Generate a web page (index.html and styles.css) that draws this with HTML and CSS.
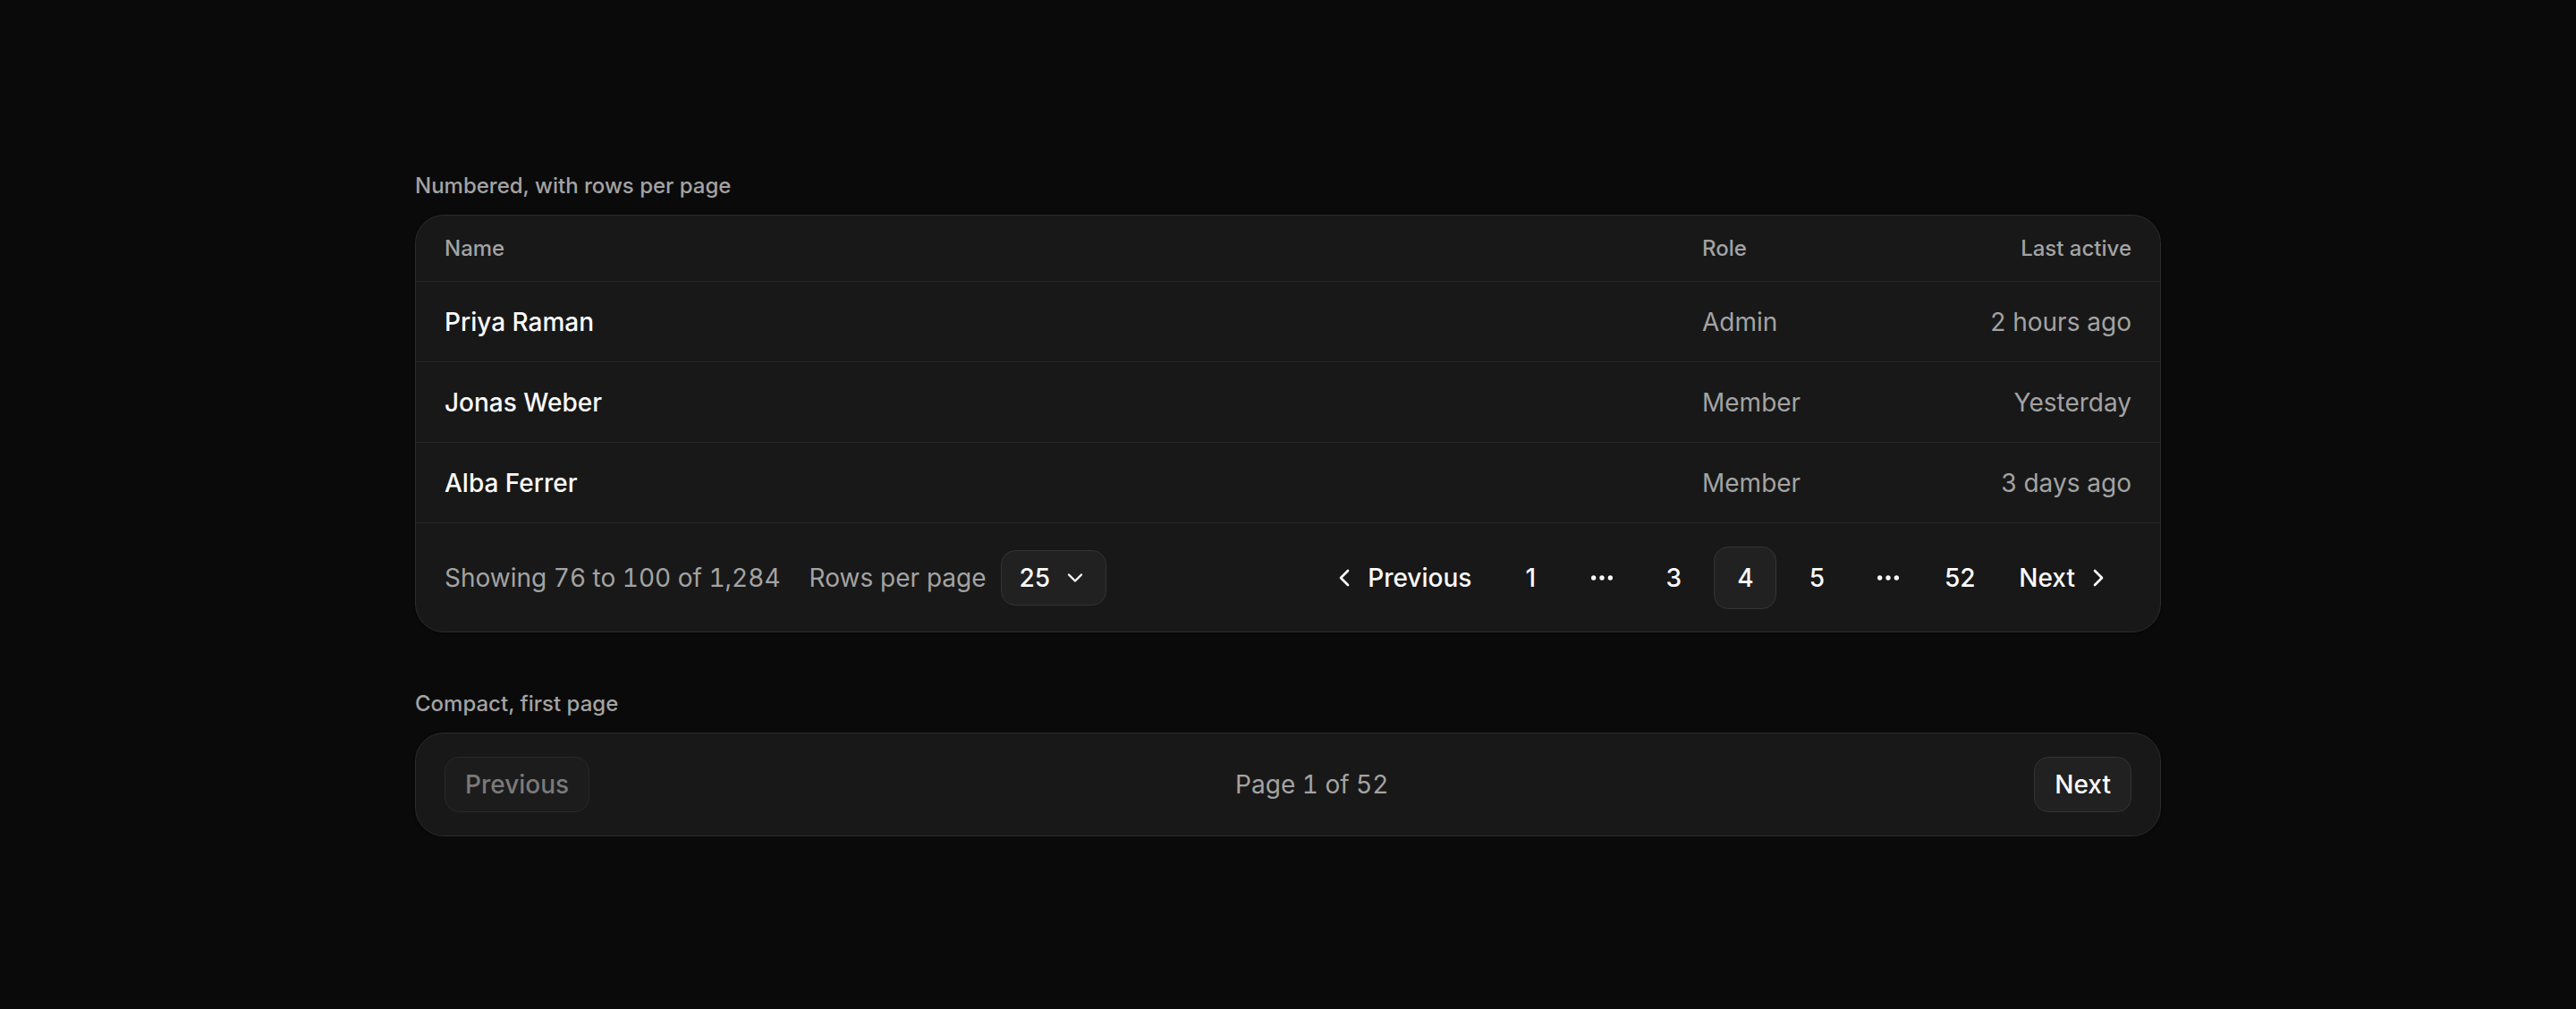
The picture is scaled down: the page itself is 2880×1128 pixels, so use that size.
FILE: index.html
```html
<!DOCTYPE html>
<html lang="en">
<head>
<meta charset="utf-8">
<title>Pagination</title>
<link rel="stylesheet" href="styles.css">
</head>
<body>
<main class="wrap">
  <section class="section">
    <div class="label">Numbered, with rows per page</div>
    <div class="card">
      <div class="row head">
        <div>Name</div>
        <div>Role</div>
        <div class="right">Last active</div>
      </div>
      <div class="row">
        <div class="name">Priya Raman</div>
        <div class="muted">Admin</div>
        <div class="muted right">2 hours ago</div>
      </div>
      <div class="row">
        <div class="name">Jonas Weber</div>
        <div class="muted">Member</div>
        <div class="muted right">Yesterday</div>
      </div>
      <div class="row">
        <div class="name">Alba Ferrer</div>
        <div class="muted">Member</div>
        <div class="muted right">3 days ago</div>
      </div>
      <div class="footer">
        <div class="meta">
          <span class="muted num">Showing 76 to 100 of 1,284</span>
          <div class="rpp">
            <span class="muted">Rows per page</span>
            <button class="select">25
              <svg class="ic-sm" viewBox="0 0 24 24" fill="none" stroke="currentColor" stroke-width="2" stroke-linecap="round" stroke-linejoin="round"><path d="m6 9 6 6 6-6"/></svg>
            </button>
          </div>
        </div>
        <nav class="pager">
          <button class="nav">
            <svg class="ic" viewBox="0 0 24 24" fill="none" stroke="currentColor" stroke-width="2" stroke-linecap="round" stroke-linejoin="round"><path d="m15 18-6-6 6-6"/></svg>
            Previous
          </button>
          <button class="page">1</button>
          <span class="page dots"><svg class="ic" viewBox="0 0 24 24" fill="none" stroke="currentColor" stroke-width="2" stroke-linecap="round" stroke-linejoin="round"><circle cx="12" cy="12" r="1"/><circle cx="19" cy="12" r="1"/><circle cx="5" cy="12" r="1"/></svg></span>
          <button class="page">3</button>
          <button class="page current">4</button>
          <button class="page">5</button>
          <span class="page dots"><svg class="ic" viewBox="0 0 24 24" fill="none" stroke="currentColor" stroke-width="2" stroke-linecap="round" stroke-linejoin="round"><circle cx="12" cy="12" r="1"/><circle cx="19" cy="12" r="1"/><circle cx="5" cy="12" r="1"/></svg></span>
          <button class="page">52</button>
          <button class="nav">
            Next
            <svg class="ic" viewBox="0 0 24 24" fill="none" stroke="currentColor" stroke-width="2" stroke-linecap="round" stroke-linejoin="round"><path d="m9 18 6-6-6-6"/></svg>
          </button>
        </nav>
      </div>
    </div>
  </section>

  <section class="section">
    <div class="label">Compact, first page</div>
    <div class="card compact">
      <button class="btn disabled">Previous</button>
      <span class="muted num">Page 1 of 52</span>
      <button class="btn">Next</button>
    </div>
  </section>
</main>
</body>
</html>
```

FILE: styles.css
```css
* { box-sizing: border-box; }

html, body {
  margin: 0;
  background: #0a0a0a;
}

body {
  font-family: Inter, "Noto Sans", "Liberation Sans", sans-serif;
  color: #fafafa;
  -webkit-font-smoothing: antialiased;
}

button {
  font-family: inherit;
  cursor: pointer;
}

.wrap {
  width: 1952px;
  margin: 0 auto;
  padding-top: 192px;
  display: flex;
  flex-direction: column;
  gap: 64px;
}

.label {
  font-size: 24px;
  line-height: 32px;
  font-weight: 500;
  color: #a3a3a3;
  margin-bottom: 16px;
}

.card {
  background: #181818;
  border: 1px solid #2c2c2c;
  border-radius: 32px;
  overflow: hidden;
  box-shadow: 0 1px 3px rgba(0, 0, 0, 0.5);
}

.row {
  display: grid;
  grid-template-columns: 1fr 240px 240px;
  align-items: center;
  padding: 0 32px;
  height: 90px;
  border-bottom: 1px solid #262626;
  font-size: 28px;
  line-height: 40px;
}

.row.head {
  height: 74px;
  font-size: 24px;
  line-height: 32px;
  font-weight: 500;
  color: #a3a3a3;
}

.right { text-align: right; }

.name {
  font-weight: 500;
  color: #fafafa;
}

.muted {
  color: #a3a3a3;
  font-size: 28px;
  line-height: 40px;
}

.num {
  font-variant-numeric: tabular-nums;
}

.footer {
  height: 121px;
  padding: 0 32px;
  display: flex;
  align-items: center;
  justify-content: space-between;
}

.meta {
  display: flex;
  align-items: center;
  gap: 32px;
}

.rpp {
  display: flex;
  align-items: center;
  gap: 16px;
}

.select {
  height: 62px;
  padding: 0 20px;
  display: flex;
  align-items: center;
  gap: 14px;
  background: #212121;
  border: 1px solid #333;
  border-radius: 16px;
  color: #fafafa;
  font-size: 28px;
  font-weight: 500;
}

.ic { width: 32px; height: 32px; flex: none; }
.ic-sm { width: 28px; height: 28px; flex: none; }

.pager {
  display: flex;
  align-items: center;
  gap: 10px;
}

.nav {
  height: 70px;
  padding: 0 20px;
  display: flex;
  align-items: center;
  gap: 10px;
  background: transparent;
  border: 1px solid transparent;
  border-radius: 16px;
  color: #fafafa;
  font-size: 28px;
  font-weight: 500;
}

.page {
  width: 70px;
  height: 70px;
  display: flex;
  align-items: center;
  justify-content: center;
  background: transparent;
  border: 1px solid transparent;
  border-radius: 16px;
  color: #fafafa;
  font-size: 28px;
  font-weight: 500;
  padding: 0;
}

.page.current {
  background: #212121;
  border-color: #353535;
}

.compact {
  height: 116px;
  padding: 0 32px;
  display: flex;
  align-items: center;
  justify-content: space-between;
}

.btn {
  height: 62px;
  padding: 0 22px;
  background: #212121;
  border: 1px solid #333;
  border-radius: 16px;
  color: #fafafa;
  font-size: 28px;
  font-weight: 500;
}

.btn.disabled {
  background: #1c1c1c;
  border-color: #292929;
  color: #7a7a7a;
  cursor: default;
}
```
